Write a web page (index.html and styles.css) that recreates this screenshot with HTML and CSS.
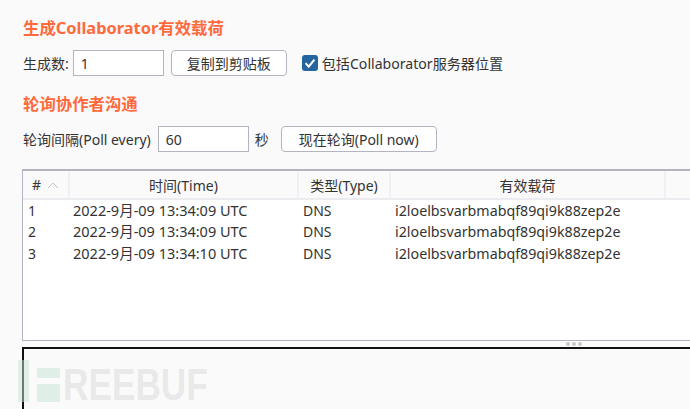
FILE: index.html
```html
<!DOCTYPE html>
<html lang="zh-CN">
<head>
    <meta charset="utf-8">
    <title>Collaborator</title>
    <link rel="stylesheet" href="styles.css">
</head>
<body>
    <h2 class="title">生成Collaborator有效载荷</h2>
    <div class="row row-first">
        <label class="lbl">生成数:</label>
        <input class="field field-count" type="text" value="1">
        <button class="btn btn-copy" type="button">复制到剪贴板</button>
        <span class="check">
            <svg width="16" height="16" viewBox="0 0 16 16"><rect width="16" height="16" rx="3" fill="#25659f"/><path d="M3.6 8.2l3.1 3.4L12.4 4.6" fill="none" stroke="#fff" stroke-width="2"/></svg>
        </span>
        <span class="lbl check-lbl">包括Collaborator服务器位置</span>
    </div>
    <h2 class="title title-second">轮询协作者沟通</h2>
    <div class="row row-second">
        <label class="lbl">轮询间隔(Poll every)</label>
        <input class="field field-poll" type="text" value="60">
        <span class="lbl unit">秒</span>
        <button class="btn btn-poll" type="button">现在轮询(Poll now)</button>
    </div>

    <div class="table-box">
        <table class="results">
            <colgroup>
                <col class="c-num"><col class="c-time"><col class="c-type"><col class="c-payload"><col class="c-rest">
            </colgroup>
            <thead>
                <tr>
                    <th>#<svg class="sort" width="12" height="6" viewBox="0 0 12 6"><path d="M1 6l5-5 5 5" fill="none" stroke="#c4c4c8"/></svg></th>
                    <th>时间(Time)</th>
                    <th>类型(Type)</th>
                    <th>有效载荷</th>
                    <th></th>
                </tr>
            </thead>
            <tbody>
                <tr><td>1</td><td class="when">2022-9月-09 13:34:09 UTC</td><td>DNS</td><td class="payload">i2loelbsvarbmabqf89qi9k88zep2e</td><td></td></tr>
                <tr><td>2</td><td class="when">2022-9月-09 13:34:09 UTC</td><td>DNS</td><td class="payload">i2loelbsvarbmabqf89qi9k88zep2e</td><td></td></tr>
                <tr class="row-last"><td>3</td><td class="when">2022-9月-09 13:34:10 UTC</td><td>DNS</td><td class="payload">i2loelbsvarbmabqf89qi9k88zep2e</td><td></td></tr>
            </tbody>
        </table>
    </div>
    <div class="splitter"><i></i><i></i><i></i></div>
    <div class="detail-box"></div>

    <div class="watermark"><span class="mark-bar"></span><span class="mark-f"><b></b><b></b></span><span class="mark-text">REEBUF</span></div>
</body>
</html>
```

FILE: styles.css
```css
html, body {
    height: 100%;
}
body {
    margin: 0;
    width: 690px;
    height: 409px;
    overflow: hidden;
    position: relative;
    background-color: #fafafa;
    color: #333;
    font-family: "Noto Sans", "Noto Sans CJK SC", sans-serif;
    font-size: 14px;
}
.title {
    margin: 0;
    padding: 17px 0 0 23px;
    height: 22px;
    line-height: 22px;
    font-size: 16.4px;
    font-weight: 700;
    color: #ff6a3d;
}
.title-second {
    padding-top: 0;
    margin-top: 17px;
}
.row {
    display: flex;
    align-items: center;
    padding-left: 23px;
    height: 26px;
}
.row-first {
    margin-top: 11px;
}
.row-second {
    margin-top: 11px;
}
.lbl {
    white-space: nowrap;
}
.check-lbl {
    font-size: 14.1px;
}
.field {
    box-sizing: border-box;
    height: 26px;
    margin-left: 4px;
    padding: 0 7px;
    border: 1px solid #b4b4c0;
    background: #fff;
    color: #333;
    font: inherit;
}
.field-count {
    width: 91px;
}
.field-poll {
    width: 91px;
    margin-left: 7px;
}
.unit {
    margin-left: 6px;
}
.btn {
    box-sizing: border-box;
    height: 26px;
    border: 1px solid #b4b4c0;
    border-radius: 4px;
    background: #fff;
    color: #333;
    font: inherit;
    padding: 0;
}
.btn-copy {
    width: 116px;
    margin-left: 7px;
}
.btn-poll {
    width: 156px;
    margin-left: 12px;
}
.check {
    display: flex;
    margin-left: 15px;
    margin-right: 4px;
}
.table-box {
    box-sizing: border-box;
    margin: 17px 0 0 22px;
    height: 172px;
    border: 1px solid #b4b4c0;
    border-top-width: 2px;
    border-right: none;
    background: #fff;
    overflow: hidden;
}
.results {
    border-collapse: collapse;
    table-layout: fixed;
    width: 667px;
}
.c-num { width: 46px; }
.c-time { width: 229px; }
.c-type { width: 92px; }
.c-payload { width: 275px; }
.c-rest { width: 25px; }
.results th {
    height: 27px;
    padding: 0;
    background: #fafafa;
    border-right: 2px solid #f0f0f2;
    border-bottom: 2px solid #ececf0;
    font-weight: 400;
    text-align: center;
}
.results th:last-child {
    border-right: none;
}
.results td {
    height: 21px;
    padding: 0 0 0 5px;
    line-height: 21px;
    white-space: nowrap;
}
.results .row-last td {
    padding-top: 1px;
}
.results .when {
    font-size: 14.5px;
    padding-left: 4px;
}
.results .payload {
    font-size: 14.25px;
}
.sort {
    margin-left: 6px;
    vertical-align: 2px;
}
.splitter {
    display: flex;
    justify-content: center;
    gap: 2px;
    height: 6px;
    align-items: center;
    padding-left: 458px;
}
.splitter i {
    width: 4px;
    height: 4px;
    border-radius: 50%;
    background: #c8c8cc;
}
.detail-box {
    box-sizing: border-box;
    margin-left: 22px;
    height: 70px;
    border: 2px solid #111;
    border-right: none;
    border-bottom: none;
    background: #fafafa;
}
.watermark {
    position: absolute;
    left: 18px;
    top: 360px;
    display: flex;
    align-items: flex-start;
}
.mark-bar {
    width: 11px;
    height: 42px;
    background: rgba(200, 228, 214, 0.5);
}
.mark-f {
    display: flex;
    flex-direction: column;
    gap: 6px;
    margin: 8px 0 0 8px;
}
.mark-f b {
    display: block;
    width: 23px;
    height: 10px;
    background: rgba(200, 228, 214, 0.55);
}
.mark-f b + b {
    height: 18px;
}
.mark-text {
    margin: 0 0 0 3px;
    font-family: "Liberation Sans", sans-serif;
    font-weight: 700;
    font-size: 44px;
    line-height: 50px;
    color: rgba(190, 190, 190, 0.3);
    transform: scaleX(0.8);
    transform-origin: left top;
}
```
